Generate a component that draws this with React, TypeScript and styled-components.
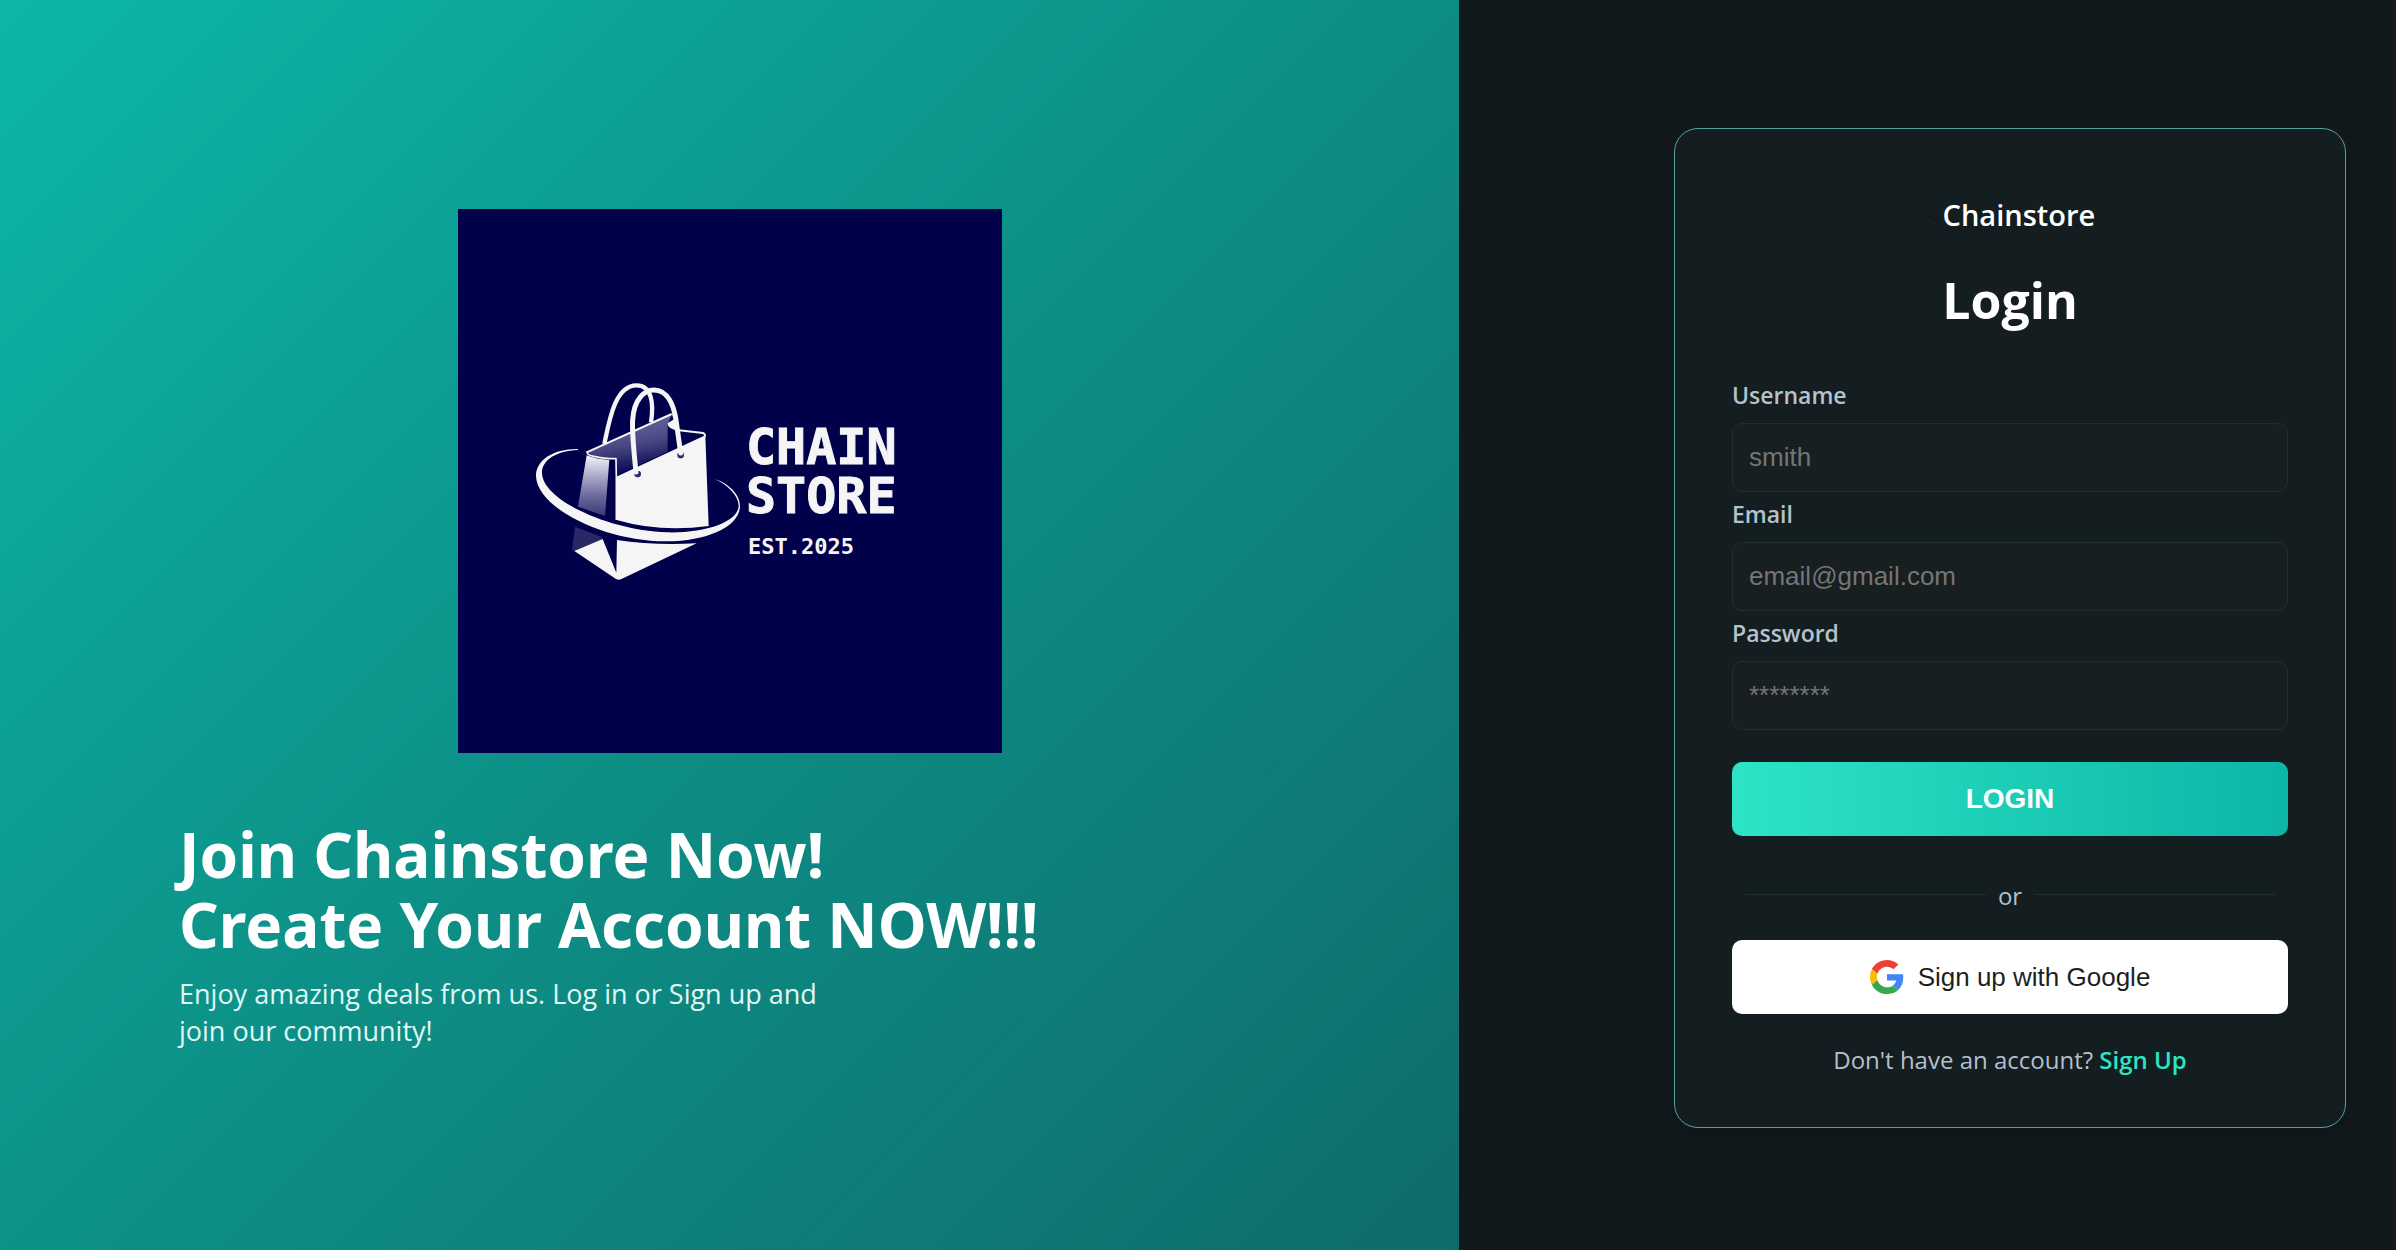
import React from "react";
import styled, { createGlobalStyle } from "styled-components";

const uiFont = `"Segoe UI", "Open Sans", "Noto Sans", sans-serif`;
const headingFont = `"Segoe UI", "Noto Sans", "Open Sans", sans-serif`;
const controlFont = `"Liberation Sans", Arial, sans-serif`;

const GlobalStyle = createGlobalStyle`
  *, *::before, *::after { box-sizing: border-box; }
  body {
    margin: 0;
    background: #12191c;
    color: #ffffff;
    font-family: ${uiFont};
  }
  h1, h2, p { margin: 0; }
`;

const Page = styled.main`
  display: grid;
  grid-template-columns: minmax(0, 1459fr) minmax(0, 937fr);
  min-height: 100vh;
`;

const Promo = styled.section`
  display: flex;
  flex-direction: column;
  justify-content: center;
  padding: 8px 179px 0;
  background: linear-gradient(135deg, #0cb6a8 0%, #0d8f86 50%, #0f6b6a 100%);
`;

const Logo = styled.svg`
  display: block;
  align-self: center;
  width: 544px;
  height: 544px;
  margin-bottom: 66px;
`;

const Headline = styled.h1`
  font-family: ${headingFont};
  font-size: 62px;
  line-height: 70px;
  font-weight: 700;
  white-space: nowrap;
`;

const Blurb = styled.p`
  max-width: 660px;
  margin-top: 16px;
  font-size: 27px;
  line-height: 37px;
  color: #e0f7f5;
`;

const Side = styled.section`
  display: flex;
  align-items: center;
  justify-content: flex-end;
  padding: 6px 50px 0;
`;

const Card = styled.div`
  width: 672px;
  padding: 64px 57px 47px;
  border: 1px solid #55a39d;
  border-radius: 24px;
  background: #141d20;
  box-shadow: 0 8px 32px rgba(0, 0, 0, 0.18);
`;

const Brand = styled.p`
  display: flex;
  justify-content: center;
  align-items: center;
  gap: 4px;
  font-size: 29px;
  line-height: 44px;
  font-weight: 600;
`;

const Back = styled.span`
  color: #10181a;
  font-size: 24px;
  font-weight: 400;
`;

const Title = styled.h2`
  margin: 28px 0 38px;
  font-size: 50px;
  line-height: 70px;
  font-weight: 700;
  text-align: center;
`;

const Form = styled.form`
  display: flex;
  flex-direction: column;
`;

const Field = styled.div`
  display: flex;
  flex-direction: column;
`;

const Label = styled.label`
  padding-bottom: 6px;
  font-size: 23px;
  line-height: 44px;
  font-weight: 600;
  color: #b5c2cc;
`;

const Input = styled.input`
  height: 69px;
  padding: 0 16px;
  border: 1px solid #20302f;
  border-radius: 10px;
  background: #181f21;
  color: #ffffff;
  font-family: ${controlFont};
  font-size: 26px;
  outline: none;
  &::placeholder { color: #757575; opacity: 1; }
`;

const Button = styled.button`
  display: flex;
  align-items: center;
  justify-content: center;
  gap: 14px;
  width: 100%;
  height: 74px;
  border: 0;
  border-radius: 10px;
  font-family: ${controlFont};
  cursor: pointer;
`;

const LoginButton = styled(Button)`
  margin-top: 32px;
  background: linear-gradient(90deg, #2de4c5, #0cb6a8);
  color: #ffffff;
  font-size: 28px;
  font-weight: 700;
`;

const GoogleButton = styled(Button)`
  background: #ffffff;
  color: #1f1f1f;
  font-size: 26px;
`;

const Divider = styled.div`
  display: flex;
  align-items: center;
  gap: 12px;
  margin: 40px 0 24px;
  padding: 0 13px;
  color: #b5bfcc;
  font-size: 24px;
  line-height: 40px;
`;

const Rule = styled.span`
  flex: 1;
  height: 1px;
  margin-bottom: 4px;
  background: #20302f;
`;

const Signup = styled.p`
  margin-top: 26px;
  font-size: 24px;
  line-height: 40px;
  text-align: center;
  color: #b5bfcc;
`;

const SignupLink = styled.a`
  color: #2de4c5;
  font-weight: 600;
  text-decoration: none;
`;

function ChainstoreLogo() {
  return (
    <Logo viewBox="0 0 544 544" role="img" aria-label="Chain Store, est. 2025">
      <defs>
        <linearGradient id="inside" x1="0.35" y1="0" x2="0.6" y2="1">
          <stop offset="0.1" stopColor="#65649a" />
          <stop offset="0.5" stopColor="#4a4984" />
          <stop offset="0.9" stopColor="#0d0b58" />
        </linearGradient>
        <linearGradient id="gusset" x1="0" y1="0" x2="0" y2="1">
          <stop offset="0" stopColor="#f4f4f6" />
          <stop offset="0.35" stopColor="#a9a8c8" />
          <stop offset="0.7" stopColor="#66659a" />
          <stop offset="1" stopColor="#3b3975" />
        </linearGradient>
      </defs>
      <rect width="544" height="544" fill="#00004b" />
      <g transform="translate(62 161) scale(0.3333)">
        <path d="M200 247 L455 133 L443 165 V245 L290 316 L288 268 L240 265 Z" fill="url(#inside)" />
        <path d="M200 256 Q230 268 268 270 L255 438 L174 410 Z" fill="url(#gusset)" />
        <path d="M165 470 L245 501 L248 507 L163 543 L156 540 Z" fill="#2a2864" />
        <path d="M163 543 L248 507 L289 608 L291 510 Q400 527 530 520 L303 628 Q295 631 288 627 Z" fill="#f5f5f6" />
        <path d="M289 320 L443 248 L556 196 L566 468 Q420 488 290 450 Z" fill="#f5f5f6" />
        <path d="M200 247 L455 132 M470 180 L549 189 Q556 191 555 200" fill="none" stroke="#f5f5f6" strokeWidth="6" />
        <path d="M202 245 Q198 254 222 259 Q250 266 288 266 L289 320 V450" fill="none" stroke="#f5f5f6" strokeWidth="5" strokeLinejoin="round" />
        <path d="M455 130 L462 148 L443 160 Q442 178 478 182 L468 140 Z" fill="#f5f5f6" />
        <path d="M253 222 C268 150 285 46 350 46 C395 46 402 100 393 157" fill="none" stroke="#f5f5f6" strokeWidth="13" />
        <circle cx="353" cy="312" r="10" fill="#2a2870" />
        <circle cx="482" cy="255" r="10" fill="#2a2870" />
        <path d="M348 306 C340 230 336 180 338 150 C342 85 375 60 402 60 C445 60 462 110 468 150 L482 249" fill="none" stroke="#f5f5f6" strokeWidth="15" strokeLinecap="round" />
        <path d="M174 237 C100 236 48 270 48 318 C50 412 250 515 440 514 C560 514 660 470 660 408 C660 370 620 338 585 328 C618 342 656 375 656 408 C654 455 560 490 440 487 C270 482 66 390 66 308 C66 270 110 242 174 240 Z" fill="#f5f5f6" />
      </g>
      <g fill="#f5f5f6" fontFamily='"DejaVu Sans Mono", monospace' fontWeight="700">
        <text x="288" y="255" fontSize="50" stroke="#f5f5f6" strokeWidth="1">CHAIN</text>
        <text x="288" y="304" fontSize="50" stroke="#f5f5f6" strokeWidth="1">STORE</text>
        <text x="290" y="345" fontSize="22">EST.2025</text>
      </g>
    </Logo>
  );
}

function GoogleMark() {
  return (
    <svg width="34" height="34" viewBox="0 0 48 48" aria-hidden="true">
      <path fill="#EA4335" d="M24 9.5c3.54 0 6.71 1.22 9.21 3.6l6.85-6.85C35.9 2.38 30.47 0 24 0 14.62 0 6.51 5.38 2.56 13.22l7.98 6.19C12.43 13.72 17.74 9.5 24 9.5z" />
      <path fill="#4285F4" d="M46.98 24.55c0-1.57-.15-3.09-.38-4.55H24v9.02h12.94c-.58 2.96-2.26 5.48-4.78 7.18l7.73 6c4.51-4.18 7.09-10.36 7.09-17.65z" />
      <path fill="#FBBC05" d="M10.53 28.59c-.48-1.45-.76-2.99-.76-4.59s.27-3.14.76-4.59l-7.98-6.19C.92 16.46 0 20.12 0 24c0 3.88.92 7.54 2.56 10.78l7.97-6.19z" />
      <path fill="#34A853" d="M24 48c6.48 0 11.93-2.13 15.89-5.81l-7.73-6c-2.15 1.45-4.92 2.3-8.16 2.3-6.26 0-11.57-4.22-13.47-9.91l-7.98 6.19C6.51 42.62 14.62 48 24 48z" />
    </svg>
  );
}

const fields = [
  { id: "username", label: "Username", type: "text", placeholder: "smith" },
  { id: "email", label: "Email", type: "email", placeholder: "email@gmail.com" },
  { id: "password", label: "Password", type: "password", placeholder: "********" },
];

export default function App() {
  return (
    <>
      <GlobalStyle />
      <Page>
        <Promo>
          <ChainstoreLogo />
          <Headline>
            Join Chainstore Now!
            <br />
            Create Your Account NOW!!!
          </Headline>
          <Blurb>Enjoy amazing deals from us. Log in or Sign up and join our community!</Blurb>
        </Promo>
        <Side>
          <Card>
            <Brand>
              <Back>&lt;</Back>
              Chainstore
            </Brand>
            <Title>Login</Title>
            <Form onSubmit={(e) => e.preventDefault()}>
              {fields.map((f) => (
                <Field key={f.id}>
                  <Label htmlFor={f.id}>{f.label}</Label>
                  <Input id={f.id} type={f.type} placeholder={f.placeholder} />
                </Field>
              ))}
              <LoginButton type="submit">LOGIN</LoginButton>
            </Form>
            <Divider>
              <Rule />
              or
              <Rule />
            </Divider>
            <GoogleButton type="button">
              <GoogleMark />
              Sign up with Google
            </GoogleButton>
            <Signup>
              Don't have an account? <SignupLink href="#signup">Sign Up</SignupLink>
            </Signup>
          </Card>
        </Side>
      </Page>
    </>
  );
}
